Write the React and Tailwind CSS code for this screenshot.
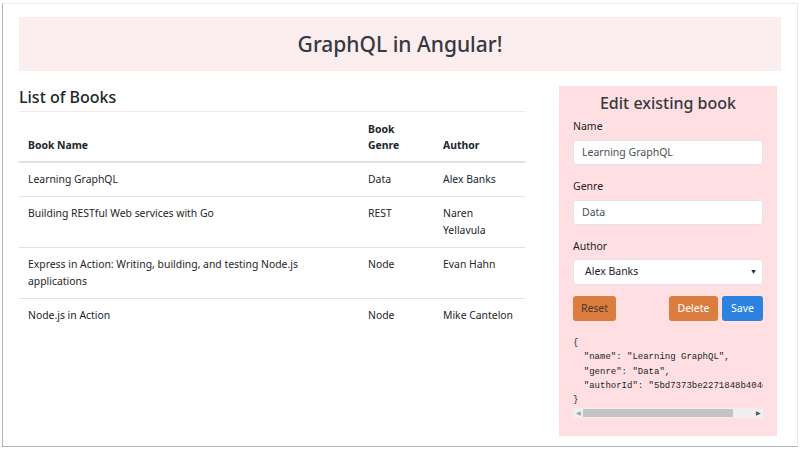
import React from 'react';

const books = [
  { name: 'Learning GraphQL', genre: 'Data', author: 'Alex Banks' },
  { name: 'Building RESTful Web services with Go', genre: 'REST', author: 'Naren Yellavula' },
  { name: 'Express in Action: Writing, building, and testing Node.js applications', genre: 'Node', author: 'Evan Hahn' },
  { name: 'Node.js in Action', genre: 'Node', author: 'Mike Cantelon' },
];

const App = () => {
  return (
    <div className="w-[800px] h-[450px] bg-white overflow-hidden" style={{ fontFamily: '"Noto Sans", "Liberation Sans", sans-serif' }}>
      {/* Frame */}
      <div className="ml-[2px] mt-[3px] w-[796px] h-[444px] border-l border-b border-[#b4b4b4] border-t border-t-[#ececec] border-r border-r-[#f3e3e6] px-[16px] pt-[13px] text-[#212529]">
        {/* Header */}
        <div className="h-[54px] bg-[#fcedef] flex items-center justify-center">
          <h1 className="text-[21px] font-medium leading-none text-[#343a40]">GraphQL in Angular!</h1>
        </div>

        <div className="flex mt-[15px]">
          {/* Left column */}
          <div className="w-[506px]">
            <h2 className="text-[16px] font-medium leading-[22px] text-[#212529] pb-[3px] border-b border-[#f8e4e7]">List of Books</h2>
            <table className="w-full table-fixed text-[10.4px] mt-[1px]">
              <thead>
                <tr className="border-b-2 border-[#dee2e6] align-bottom">
                  <th className="w-[340px] text-left font-bold px-[9px] py-2 leading-[16px]">Book Name</th>
                  <th className="w-[75px] text-left font-bold px-[9px] py-2 leading-[16px]">Book Genre</th>
                  <th className="text-left font-bold px-[9px] py-2 leading-[16px]">Author</th>
                </tr>
              </thead>
              <tbody>
                {books.map((b, i) => (
                  <tr key={i} className={i > 0 ? 'border-t border-[#dbe4ec] align-top' : 'align-top'}>
                    <td className="px-[9px] py-2 leading-[17px]">{b.name}</td>
                    <td className="px-[9px] py-2 leading-[17px]">{b.genre}</td>
                    <td className="px-[9px] py-2 leading-[17px]">{b.author}</td>
                  </tr>
                ))}
              </tbody>
            </table>
          </div>

          {/* Right panel */}
          <div className="ml-[34px] w-[218px] h-[350px] bg-[#ffdfe2] px-[14px] pt-[6px]">
            <h3 className="text-[16px] font-medium leading-[22px] text-center text-[#343a40]">Edit existing book</h3>
            <div className="mt-[5px] text-[10.5px]">
              <label className="block leading-[14px] mb-[7px]">Name</label>
              <div className="h-[25px] bg-white border border-[#e3e3ea] rounded-[3px] flex items-center px-[8px] text-[#495057]">Learning GraphQL</div>
            </div>
            <div className="mt-[14px] text-[10.5px]">
              <label className="block leading-[14px] mb-[7px]">Genre</label>
              <div className="h-[25px] bg-white border border-[#e3e3ea] rounded-[3px] flex items-center px-[8px] text-[#495057]">Data</div>
            </div>
            <div className="mt-[14px] text-[10.5px]">
              <label className="block leading-[14px] mb-[6px]">Author</label>
              <div className="h-[26px] bg-white border border-[#e3e3ea] rounded-[3px] flex items-center justify-between pl-[11px] pr-[5px] text-[#212529]">
                <span>Alex Banks</span>
                <span className="text-[7px]">▼</span>
              </div>
            </div>
            <div className="flex mt-[11px] text-[10.5px]">
              <button className="w-[43px] h-[25px] bg-[#da7d3e] rounded-[3px] text-[#4a3a30]">Reset</button>
              <div className="flex-1" />
              <button className="w-[49px] h-[25px] bg-[#da7d3e] rounded-[3px] text-white">Delete</button>
              <button className="ml-[4px] w-[41px] h-[25px] bg-[#2b83df] rounded-[3px] text-white">Save</button>
            </div>
            <pre className="mt-[15px] text-[9px] leading-[14.3px] text-[#212529] overflow-hidden whitespace-pre" style={{ fontFamily: '"Liberation Mono", monospace' }}>
{`{
  "name": "Learning GraphQL",
  "genre": "Data",
  "authorId": "5bd7373be2271848b404c
}`}
            </pre>
            {/* scrollbar */}
            <div className="mt-[1px] h-[10px] bg-[#efefef] flex items-center">
              <span className="w-[10px] text-[6px] text-center text-[#a0a0a0]">◀</span>
              <div className="w-[150px] h-[8px] bg-[#c4c4c4]" />
              <div className="flex-1" />
              <span className="w-[10px] text-[6px] text-center text-[#505050]">▶</span>
            </div>
          </div>
        </div>
      </div>
    </div>
  );
};

export default App;
